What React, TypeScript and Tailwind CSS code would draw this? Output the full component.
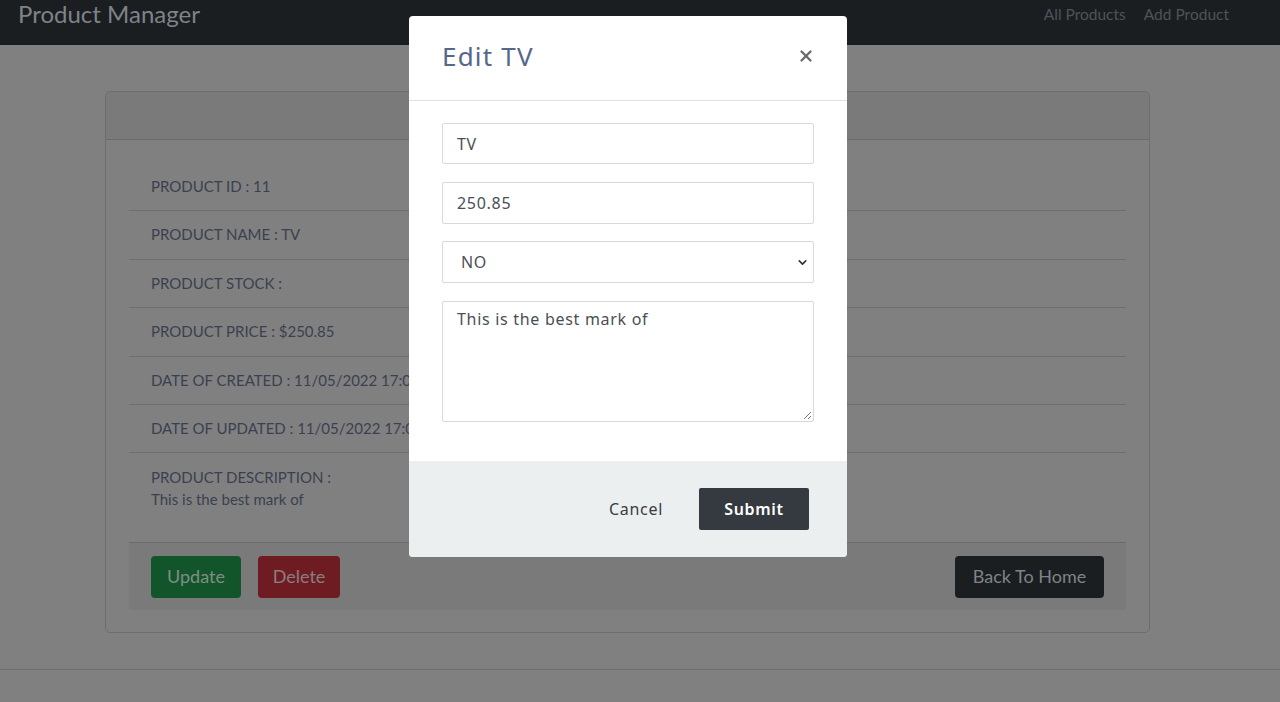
import React from 'react';
import { X, ChevronDown } from 'lucide-react';

const rows = [
  'PRODUCT ID : 11',
  'PRODUCT NAME : TV',
  'PRODUCT STOCK :',
  'PRODUCT PRICE : $250.85',
  'DATE OF CREATED : 11/05/2022 17:03:21',
  'DATE OF UPDATED : 11/05/2022 17:03:21',
];

const bodyFont = { fontFamily: 'Lato, "Open Sans", sans-serif' };
const modalFont = { fontFamily: '"Noto Sans", "Open Sans", sans-serif' };

const App: React.FC = () => {
  return (
    <div className="relative w-full h-[702px] overflow-hidden bg-[#808080]" style={bodyFont}>
      {/* Navbar */}
      <nav className="h-[45px] bg-[#1b1e21] flex items-start justify-between pl-[18px] pr-[51px]">
        <span className="text-[24px] leading-[28px] text-[#7f8387]">Product Manager</span>
        <div className="flex gap-[18px] pt-[4px] text-[15.5px] leading-[20px] text-[#4f5358]">
          <span>All Products</span>
          <span>Add Product</span>
        </div>
      </nav>

      {/* Card */}
      <div className="ml-[105px] mt-[46px] w-[1045px] border border-[#6e6e6e] rounded-[5px]">
        <div className="h-[48px] bg-[#7a7a7a] border-b border-[#6b6b6b] rounded-t-[5px]"></div>
        <div className="px-[23px] pt-[23px] pb-[22px]">
          <ul className="text-[15px] text-[#3b4050]">
            {rows.map(r => (
              <li key={r} className="px-[22px] py-[12px] leading-[23.4px] border-b border-[#6e6e6e]">{r}</li>
            ))}
            <li className="px-[22px] pt-[13px] pb-[32px] leading-[22px]">
              <div>PRODUCT DESCRIPTION :</div>
              <div>This is the best mark of</div>
            </li>
          </ul>
          <div className="h-[68px] bg-[#7a7a7a] border-t border-[#6b6b6b] flex items-center justify-between px-[22px] text-[18px] text-[#82878b]">
            <div className="flex gap-[17px]">
              <button className="h-[42px] w-[90px] rounded-[4px] bg-[#13552a] text-[#7e8e84]">Update</button>
              <button className="h-[42px] w-[82px] rounded-[4px] bg-[#6e1c22] text-[#8a7e80]">Delete</button>
            </div>
            <button className="h-[42px] w-[149px] rounded-[4px] bg-[#1b1e21] text-[#7f8387]">Back To Home</button>
          </div>
        </div>
      </div>
      <div className="mt-[36px] border-t border-[#6e6e6e]"></div>

      {/* Modal */}
      <div className="absolute left-[409px] top-[16px] w-[438px] bg-white rounded-[4px] overflow-hidden" style={modalFont}>
        <div className="h-[85px] border-b border-[#dee2e6] flex items-center justify-between pl-[33px] pr-[32px] pb-[4px]">
          <h2 className="text-[26px] tracking-[1.2px] text-[#56688a]">Edit TV</h2>
          <X size={18} strokeWidth={3.2} className="text-[#6c6c6c]" />
        </div>
        <div className="px-[33px] pt-[22px] pb-[39px] flex flex-col text-[16px] tracking-[0.7px] text-[#4a4f57]">
          <div className="h-[41px] border border-[#d9d9d9] rounded-[2px] flex items-center px-[14px]">TV</div>
          <div className="mt-[18px] h-[42px] border border-[#d9d9d9] rounded-[2px] flex items-center px-[14px]">250.85</div>
          <div className="mt-[17px] h-[42px] border border-[#d9d9d9] rounded-[2px] flex items-center justify-between pl-[18px] pr-[4px]">
            <span>NO</span>
            <ChevronDown size={13} strokeWidth={3} className="text-[#333]" />
          </div>
          <div className="mt-[18px] relative h-[121px] border border-[#d9d9d9] rounded-[2px] px-[14px] pt-[5px]">
            This is the best mark of
            <svg className="absolute right-[1px] bottom-[1px]" width="9" height="9" viewBox="0 0 9 9">
              <path d="M8 1 L1 8 M8 5 L5 8" stroke="#777" strokeWidth="1" />
            </svg>
          </div>
        </div>
        <div className="h-[96px] bg-[#ebeff0] flex items-center justify-end gap-[36px] pr-[38px] text-[16px] tracking-[0.7px]">
          <span className="text-[#3a3d42]">Cancel</span>
          <button className="h-[42px] w-[110px] bg-[#343a40] rounded-[2px] text-white font-semibold">Submit</button>
        </div>
      </div>
    </div>
  );
};

export default App;
